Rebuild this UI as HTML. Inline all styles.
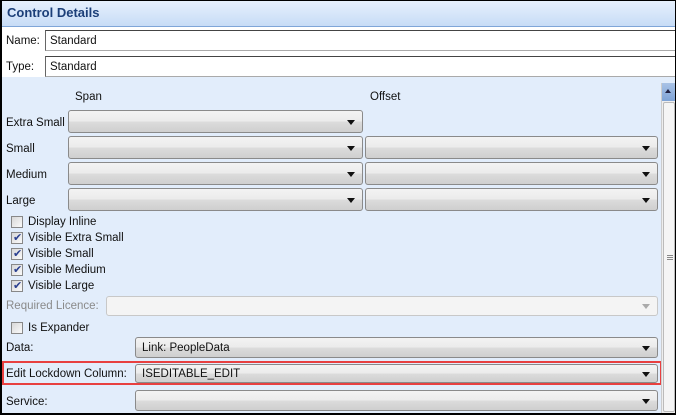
<!DOCTYPE html>
<html><head><style>
*{box-sizing:border-box;margin:0;padding:0}
body{width:676px;height:415px;overflow:hidden;font-family:"Liberation Sans",sans-serif;font-size:11.5px;color:#111;background:#e2edfb;position:relative}
.frame{position:absolute;left:0;top:0;width:676px;height:415px;border:1px solid #000;border-left-width:2px;border-bottom-width:2px;pointer-events:none;z-index:9}
.hdr{position:absolute;left:0;top:0;width:676px;height:27px;background:linear-gradient(#e8f1fd,#c7dcf6);border-bottom:1px solid #7fa6d8}
.hdr b{position:absolute;left:7px;top:5px;font-size:13px;color:#1c3f78}
.top{position:absolute;left:0;top:27px;width:676px;height:50px;background:#fff}
.t{position:absolute;white-space:nowrap}
.inp{position:absolute;background:#fff;border:1px solid #aaa;border-top:1px solid #444;border-left:1px solid #666;padding:4px 0 0 4px}
.sel{position:absolute;border:1px solid #8a8a8a;border-radius:3px;background:linear-gradient(#f3f3f3 0%,#ebebeb 50%,#dcdcdc 51%,#cfcfcf 100%);padding:4px 0 0 6px}
.sel:after{content:"";position:absolute;right:7px;top:50%;margin-top:-2px;border-left:4px solid transparent;border-right:4px solid transparent;border-top:5px solid #111}
.dis{background:#f4f4f4;border-color:#c8c8c8}
.dis:after{border-top-color:#aaa}
.cb{position:absolute;left:11px;width:12px;height:12px;border:1px solid #888;background:linear-gradient(135deg,#d8d8d8,#fafafa)}
.cb.on:after{content:"✔";position:absolute;left:1px;top:-2px;font-size:11px;color:#2a3f8f}
.cl{position:absolute;left:28px}
.sb{position:absolute;left:661px;top:83px;width:14px;height:330px;background:#eee;border-left:1px solid #ccc}
.sb .up{height:18px;background:linear-gradient(#a9c3e6,#7fa3d6);position:relative}
.sb .up:after{content:"";position:absolute;left:3px;top:6px;border-left:3px solid transparent;border-right:3px solid transparent;border-bottom:4px solid #224}
.sb .th{position:absolute;left:1px;top:19px;width:12px;height:310px;background:#f5f5f5;border:1px solid #bbb;border-radius:2px}
.grip{position:absolute;left:3px;top:152px;width:6px;height:1px;background:#888;box-shadow:0 2px #888,0 4px #888}
</style></head><body>
<div class="hdr"><b>Control Details</b></div>
<div class="top"></div>
<div class="t" style="left:6px;top:35px">Name:</div>
<div class="inp" style="left:45px;top:30px;width:631px;height:21px">Standard</div>
<div class="t" style="left:6px;top:61px">Type:</div>
<div class="inp" style="left:45px;top:56px;width:631px;height:21px">Standard</div>

<div class="t" style="left:75px;top:91px">Span</div>
<div class="t" style="left:370px;top:91px">Offset</div>

<div class="t" style="left:6px;top:117px">Extra Small</div>
<div class="sel" style="left:68px;top:110px;width:295px;height:23px"></div>
<div class="t" style="left:6px;top:143px">Small</div>
<div class="sel" style="left:68px;top:136px;width:295px;height:23px"></div>
<div class="sel" style="left:365px;top:136px;width:293px;height:23px"></div>
<div class="t" style="left:6px;top:169px">Medium</div>
<div class="sel" style="left:68px;top:162px;width:295px;height:23px"></div>
<div class="sel" style="left:365px;top:162px;width:293px;height:23px"></div>
<div class="t" style="left:6px;top:195px">Large</div>
<div class="sel" style="left:68px;top:188px;width:295px;height:23px"></div>
<div class="sel" style="left:365px;top:188px;width:293px;height:23px"></div>

<div class="cb" style="top:216px"></div><div class="t cl" style="top:216px">Display Inline</div>
<div class="cb on" style="top:232px"></div><div class="t cl" style="top:232px">Visible Extra Small</div>
<div class="cb on" style="top:248px"></div><div class="t cl" style="top:248px">Visible Small</div>
<div class="cb on" style="top:264px"></div><div class="t cl" style="top:264px">Visible Medium</div>
<div class="cb on" style="top:280px"></div><div class="t cl" style="top:280px">Visible Large</div>

<div class="t" style="left:6px;top:300px;color:#8a8a8a">Required Licence:</div>
<div class="sel dis" style="left:106px;top:296px;width:552px;height:20px"></div>

<div class="cb" style="top:322px"></div><div class="t cl" style="top:322px">Is Expander</div>

<div class="t" style="left:6px;top:342px">Data:</div>
<div class="sel" style="left:135px;top:337px;width:523px;height:21px">Link: PeopleData</div>

<div style="position:absolute;left:2px;top:361px;width:660px;height:24px;border:2px solid #e84040"></div>
<div class="t" style="left:6px;top:368px">Edit Lockdown Column:</div>
<div class="sel" style="left:135px;top:364px;width:523px;height:19px;padding-top:3px">ISEDITABLE_EDIT</div>

<div class="t" style="left:6px;top:396px">Service:</div>
<div class="sel" style="left:135px;top:390px;width:523px;height:21px"></div>

<div class="sb"><div class="up"></div><div class="th"><div class="grip"></div></div></div>
<div class="frame"></div>
</body></html>
